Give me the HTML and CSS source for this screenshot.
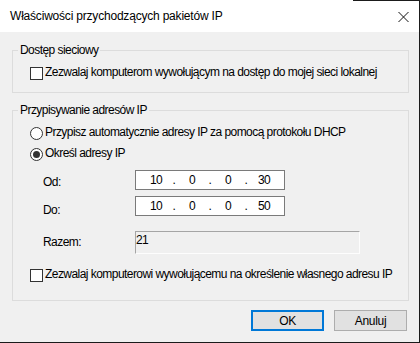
FILE: index.html
```html
<html lang="pl">
<head>
    <meta charset="UTF-8">
    <title>Właściwości przychodzących pakietów IP</title>
    <link rel="stylesheet" href="styles.css">
</head>
<body>

    <div class="window">
        <div class="titlebar">
            <span class="title">Właściwości przychodzących pakietów IP</span>
            <svg class="close" width="11" height="10" viewBox="0 0 11 10">
                <path d="M0.5 0 L10.5 10 M10.5 0 L0.5 10" stroke="#111" stroke-width="1" fill="none"/>
            </svg>
        </div>

        <div class="content">
            <fieldset class="group">
                <legend>Dostęp sieciowy</legend>
                <div class="group-body body-access">
                    <label class="option"><span class="checkbox"></span>Zezwalaj komputerom wywołującym na dostęp do mojej sieci lokalnej</label>
                </div>
            </fieldset>

            <fieldset class="group group-ip">
                <legend>Przypisywanie adresów IP</legend>
                <div class="group-body body-ip">
                    <label class="option"><span class="radio"></span>Przypisz automatycznie adresy IP za pomocą protokołu DHCP</label>
                    <label class="option option-static"><span class="radio checked"></span>Określ adresy IP</label>

                    <div class="field-row row-from">
                        <span class="field-label">Od:</span>
                        <div class="ip-box">
                            <span class="octet">10</span><span class="dot">.</span>
                            <span class="octet">0</span><span class="dot">.</span>
                            <span class="octet">0</span><span class="dot">.</span>
                            <span class="octet">30</span>
                        </div>
                    </div>

                    <div class="field-row row-to">
                        <span class="field-label">Do:</span>
                        <div class="ip-box">
                            <span class="octet">10</span><span class="dot">.</span>
                            <span class="octet">0</span><span class="dot">.</span>
                            <span class="octet">0</span><span class="dot">.</span>
                            <span class="octet">50</span>
                        </div>
                    </div>

                    <div class="field-row row-total">
                        <span class="field-label">Razem:</span>
                        <div class="total-box">21</div>
                    </div>

                    <label class="option option-own"><span class="checkbox"></span>Zezwalaj komputerowi wywołującemu na określenie własnego adresu IP</label>
                </div>
            </fieldset>

            <div class="buttons">
                <button class="btn btn-default">OK</button>
                <button class="btn">Anuluj</button>
            </div>
        </div>

        <div class="backdrop-edge"></div>
    </div>

</body>
</html>
```

FILE: styles.css
```css
* {
    margin: 0;
    padding: 0;
    box-sizing: border-box;
}

body {
    background: #1b1b1b;
    font-family: "Liberation Sans", Arial, sans-serif;
    font-size: 12px;
    letter-spacing: -0.55px;
    color: #000;
    overflow: hidden;
}

.window {
    position: relative;
    width: 419px;
    height: 342px;
    background: #f0f0f0;
}

/* Title bar */
.titlebar {
    display: flex;
    align-items: center;
    justify-content: space-between;
    height: 32px;
    padding: 1px 10px 0 10px;
    background: #fff;
}

.title {
    letter-spacing: -0.2px;
    line-height: 15px;
}

.close {
    display: block;
}

.backdrop-edge {
    position: absolute;
    top: 0;
    left: 353px;
    width: 66px;
    height: 1px;
    background: #1b1b1b;
}

/* Content */
.content {
    padding: 11px 10px 0 12px;
}

.group {
    border: 1px solid #dcdcdc;
    padding: 0;
    margin: 0;
    min-width: 0;
}

.group legend {
    margin-left: 5px;
    padding: 0 2px;
    line-height: 14px;
}

.group-ip {
    margin-top: 10px;
}

.group-body {
    padding-left: 17px;
}

.body-access {
    padding-top: 8px;
    padding-bottom: 12px;
}

.body-ip {
    padding-top: 8px;
    padding-bottom: 18px;
}

/* Checkboxes and radios */
.option {
    display: flex;
    align-items: flex-start;
    line-height: 15px;
    height: 15px;
}

.checkbox, .radio {
    width: 13px;
    height: 13px;
    margin-top: 2px;
    margin-right: 2px;
    border: 1px solid #333;
    background: #fff;
    flex-shrink: 0;
}

.radio {
    border-radius: 50%;
    display: flex;
    align-items: center;
    justify-content: center;
}

.radio.checked::after {
    content: "";
    width: 7px;
    height: 7px;
    border-radius: 50%;
    background: #333;
}

.option-static {
    margin-top: 6px;
}

.option-own {
    margin-top: 13px;
}

/* Address fields */
.field-row {
    display: flex;
    align-items: flex-start;
}

.field-label {
    width: 92px;
    margin-left: 13px;
    line-height: 15px;
}

.row-from {
    margin-top: 9px;
}

.row-from .field-label {
    margin-top: 5px;
}

.row-to {
    margin-top: 6px;
}

.row-to .field-label {
    margin-top: 7px;
}

.row-total {
    margin-top: 13px;
}

.row-total .field-label {
    margin-top: 4px;
}

.ip-box {
    display: flex;
    width: 150px;
    height: 20px;
    padding-left: 8px;
    border: 1px solid #7a7a7a;
    background: #fff;
    line-height: 18px;
}

.octet {
    width: 24px;
    text-align: center;
}

.dot {
    width: 12px;
    text-align: center;
}

.total-box {
    width: 225px;
    height: 23px;
    padding-top: 1px;
    line-height: 15px;
    border-top: 1px solid #a5a5a5;
    border-left: 1px solid #a5a5a5;
    border-right: 1px solid #fdfdfd;
    border-bottom: 1px solid #fdfdfd;
}

/* Buttons */
.buttons {
    display: flex;
    justify-content: flex-end;
    gap: 10px;
    margin-top: 9px;
    padding-right: 2px;
}

.btn {
    width: 73px;
    height: 21px;
    background: #e1e1e1;
    border: 1px solid #adadad;
    font-family: inherit;
    font-size: 12px;
    letter-spacing: -0.3px;
    color: #000;
}

.btn-default {
    border: 2px solid #0078d7;
}
```
